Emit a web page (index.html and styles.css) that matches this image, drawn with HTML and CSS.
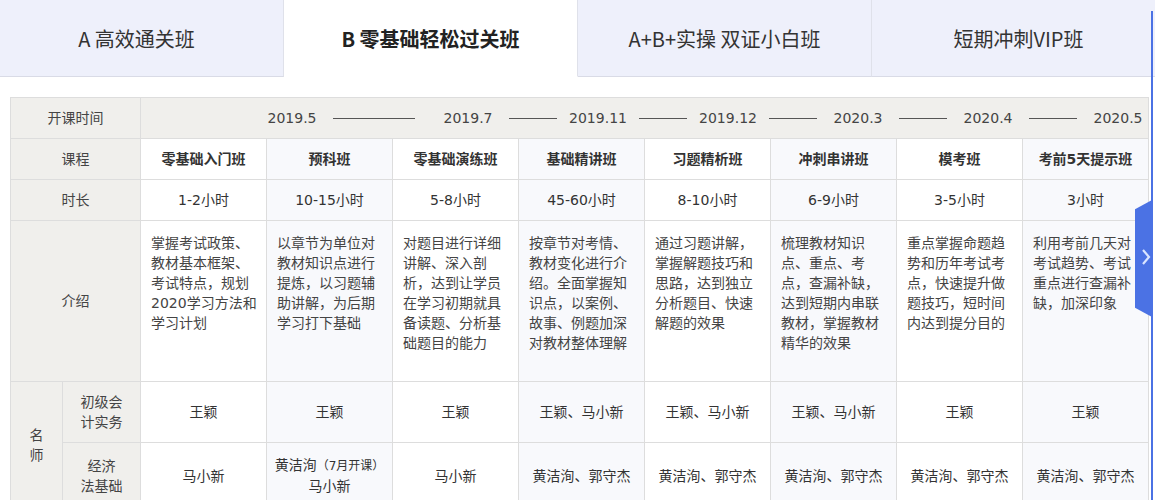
FILE: index.html
```html
<!DOCTYPE html>
<html lang="zh-CN">
<head>
<meta charset="utf-8">
<title>课程安排</title>
<link rel="stylesheet" href="styles.css">
</head>
<body>
<div class="page">
  <nav class="tabs">
    <div class="tab">A 高效通关班</div>
    <div class="tab active">B 零基础轻松过关班</div>
    <div class="tab">A+B+实操 双证小白班</div>
    <div class="tab">短期冲刺VIP班</div>
  </nav>

  <table class="plan">
    <colgroup>
      <col class="c-group">
      <col class="c-sub">
      <col class="c-data">
      <col class="c-data alt">
      <col class="c-data">
      <col class="c-data alt">
      <col class="c-data">
      <col class="c-data alt">
      <col class="c-data">
      <col class="c-data alt">
    </colgroup>
    <tr class="r-date">
      <th colspan="2" class="label">开课时间</th>
      <td colspan="8" class="dates">
        <div class="timeline">
          <span class="date">2019.5</span><span class="dash long"></span>
          <span class="date">2019.7</span><span class="dash"></span>
          <span class="date">2019.11</span><span class="dash"></span>
          <span class="date">2019.12</span><span class="dash"></span>
          <span class="date">2020.3</span><span class="dash"></span>
          <span class="date">2020.4</span><span class="dash"></span>
          <span class="date">2020.5</span>
        </div>
      </td>
    </tr>
    <tr class="r-std">
      <th colspan="2" class="label">课程</th>
      <td class="course">零基础入门班</td>
      <td class="course">预科班</td>
      <td class="course">零基础演练班</td>
      <td class="course">基础精讲班</td>
      <td class="course">习题精析班</td>
      <td class="course">冲刺串讲班</td>
      <td class="course">模考班</td>
      <td class="course">考前5天提示班</td>
    </tr>
    <tr class="r-std">
      <th colspan="2" class="label">时长</th>
      <td>1-2小时</td>
      <td>10-15小时</td>
      <td>5-8小时</td>
      <td>45-60小时</td>
      <td>8-10小时</td>
      <td>6-9小时</td>
      <td>3-5小时</td>
      <td>3小时</td>
    </tr>
    <tr class="r-intro">
      <th colspan="2" class="label">介绍</th>
      <td class="intro">掌握考试政策、教材基本框架、考试特点，规划2020学习方法和学习计划</td>
      <td class="intro">以章节为单位对教材知识点进行提炼，以习题辅助讲解，为后期学习打下基础</td>
      <td class="intro">对题目进行详细讲解、深入剖析，达到让学员在学习初期就具备读题、分析基础题目的能力</td>
      <td class="intro">按章节对考情、教材变化进行介绍。全面掌握知识点，以案例、故事、例题加深对教材整体理解</td>
      <td class="intro">通过习题讲解，掌握解题技巧和思路，达到独立分析题目、快速解题的效果</td>
      <td class="intro">梳理教材知识点、重点、考点，查漏补缺，达到短期内串联教材，掌握教材精华的效果</td>
      <td class="intro">重点掌握命题趋势和历年考试考点，快速提升做题技巧，短时间内达到提分目的</td>
      <td class="intro">利用考前几天对考试趋势、考试重点进行查漏补缺，加深印象</td>
    </tr>
    <tr class="r-teacher">
      <th rowspan="2" class="label group">名<br>师</th>
      <th class="label sub">初级会<br>计实务</th>
      <td>王颖</td>
      <td>王颖</td>
      <td>王颖</td>
      <td>王颖、马小新</td>
      <td>王颖、马小新</td>
      <td>王颖、马小新</td>
      <td>王颖</td>
      <td>王颖</td>
    </tr>
    <tr class="r-teacher2">
      <th class="label sub">经济<br>法基础</th>
      <td>马小新</td>
      <td>黄洁洵<span class="note">（7月开课）</span><br>马小新</td>
      <td>马小新</td>
      <td>黄洁洵、郭守杰</td>
      <td>黄洁洵、郭守杰</td>
      <td>黄洁洵、郭守杰</td>
      <td>黄洁洵、郭守杰</td>
      <td>黄洁洵、郭守杰</td>
    </tr>
  </table>

  <div class="side-line"></div>
  <div class="side-tab">
    <svg class="chev" width="16" height="20" viewBox="0 0 16 20" aria-hidden="true">
      <polyline points="7,3 13,10 7,17" fill="none" stroke="#d9e4ff" stroke-width="2.2" stroke-linejoin="miter"/>
    </svg>
  </div>
</div>
</body>
</html>
```

FILE: styles.css
```css
* { box-sizing: border-box; }

html, body {
  margin: 0;
  padding: 0;
  background: #fff;
  overflow: hidden;
}

body {
  font-family: "Noto Sans CJK SC", "Noto Sans", sans-serif;
  color: #333;
  font-size: 14px;
}

.page {
  position: relative;
  width: 1155px;
  height: 500px;
  overflow: hidden;
}

/* ---------- tabs ---------- */
.tabs {
  display: flex;
  margin-left: -10px;
  width: 1176px;
}

.tab {
  flex: 0 0 294px;
  height: 77px;
  display: flex;
  align-items: center;
  justify-content: center;
  background: #eef0fb;
  border-bottom: 1px solid #d9dbe6;
  border-right: 1px solid #dfe1ea;
  font-size: 20px;
  color: #333;
}

.tab.active {
  background: #fff;
  border-bottom-color: #fff;
  font-weight: 700;
  color: #222;
}

/* ---------- table ---------- */
.plan {
  margin: 20px 0 0 10px;
  width: 1138px;
  table-layout: fixed;
  border-collapse: collapse;
  font-family: "DejaVu Sans", "Noto Sans CJK SC", sans-serif;
  font-size: 14px;
}

.c-group { width: 52px; }
.c-sub { width: 78px; }
.c-data { width: 126px; }
.c-data.alt { background: #f8f9fc; }

.plan th,
.plan td {
  border: 1px solid #dddddd;
  text-align: center;
  vertical-align: middle;
  padding: 0;
  font-weight: 400;
  color: #333;
  line-height: 20px;
}

.plan .label {
  background: #f0efec;
  color: #444;
}

.r-date th, .r-date td { height: 41px; }
.r-std th, .r-std td { height: 41px; }
.r-intro th, .r-intro td { height: 161px; }
.r-teacher th, .r-teacher td { height: 61px; }
.r-teacher2 th, .r-teacher2 td { height: 66px; }

.dates {
  background: #f0efec;
}

.timeline {
  display: flex;
  align-items: center;
  padding-left: 119px;
  color: #444;
}

.date {
  flex: 0 0 64px;
  text-align: center;
  white-space: nowrap;
}

.dash {
  flex: 0 0 48px;
  height: 1px;
  background: #555;
  margin: 0 9px;
}

.dash.long {
  flex-basis: 82px;
  margin-right: 21px;
}

.plan td.course {
  font-weight: 700;
  color: #333;
}

.plan td.intro {
  vertical-align: top;
  text-align: left;
  padding: 12px 8px 0 10px;
  line-height: 20px;
  color: #444;
}

.note {
  font-size: 12px;
}

/* ---------- side handle ---------- */
.side-line {
  position: absolute;
  left: 1151px;
  top: 11px;
  bottom: 0;
  width: 2px;
  background: #4b72e4;
}

.side-tab {
  position: absolute;
  left: 1135px;
  top: 200px;
  width: 17px;
  height: 117px;
  background: #4b72e4;
  clip-path: polygon(100% 0, 0 8%, 0 92%, 100% 100%);
  display: flex;
  align-items: center;
  justify-content: center;
}

.chev {
  display: block;
  margin-top: -4px;
}
```
